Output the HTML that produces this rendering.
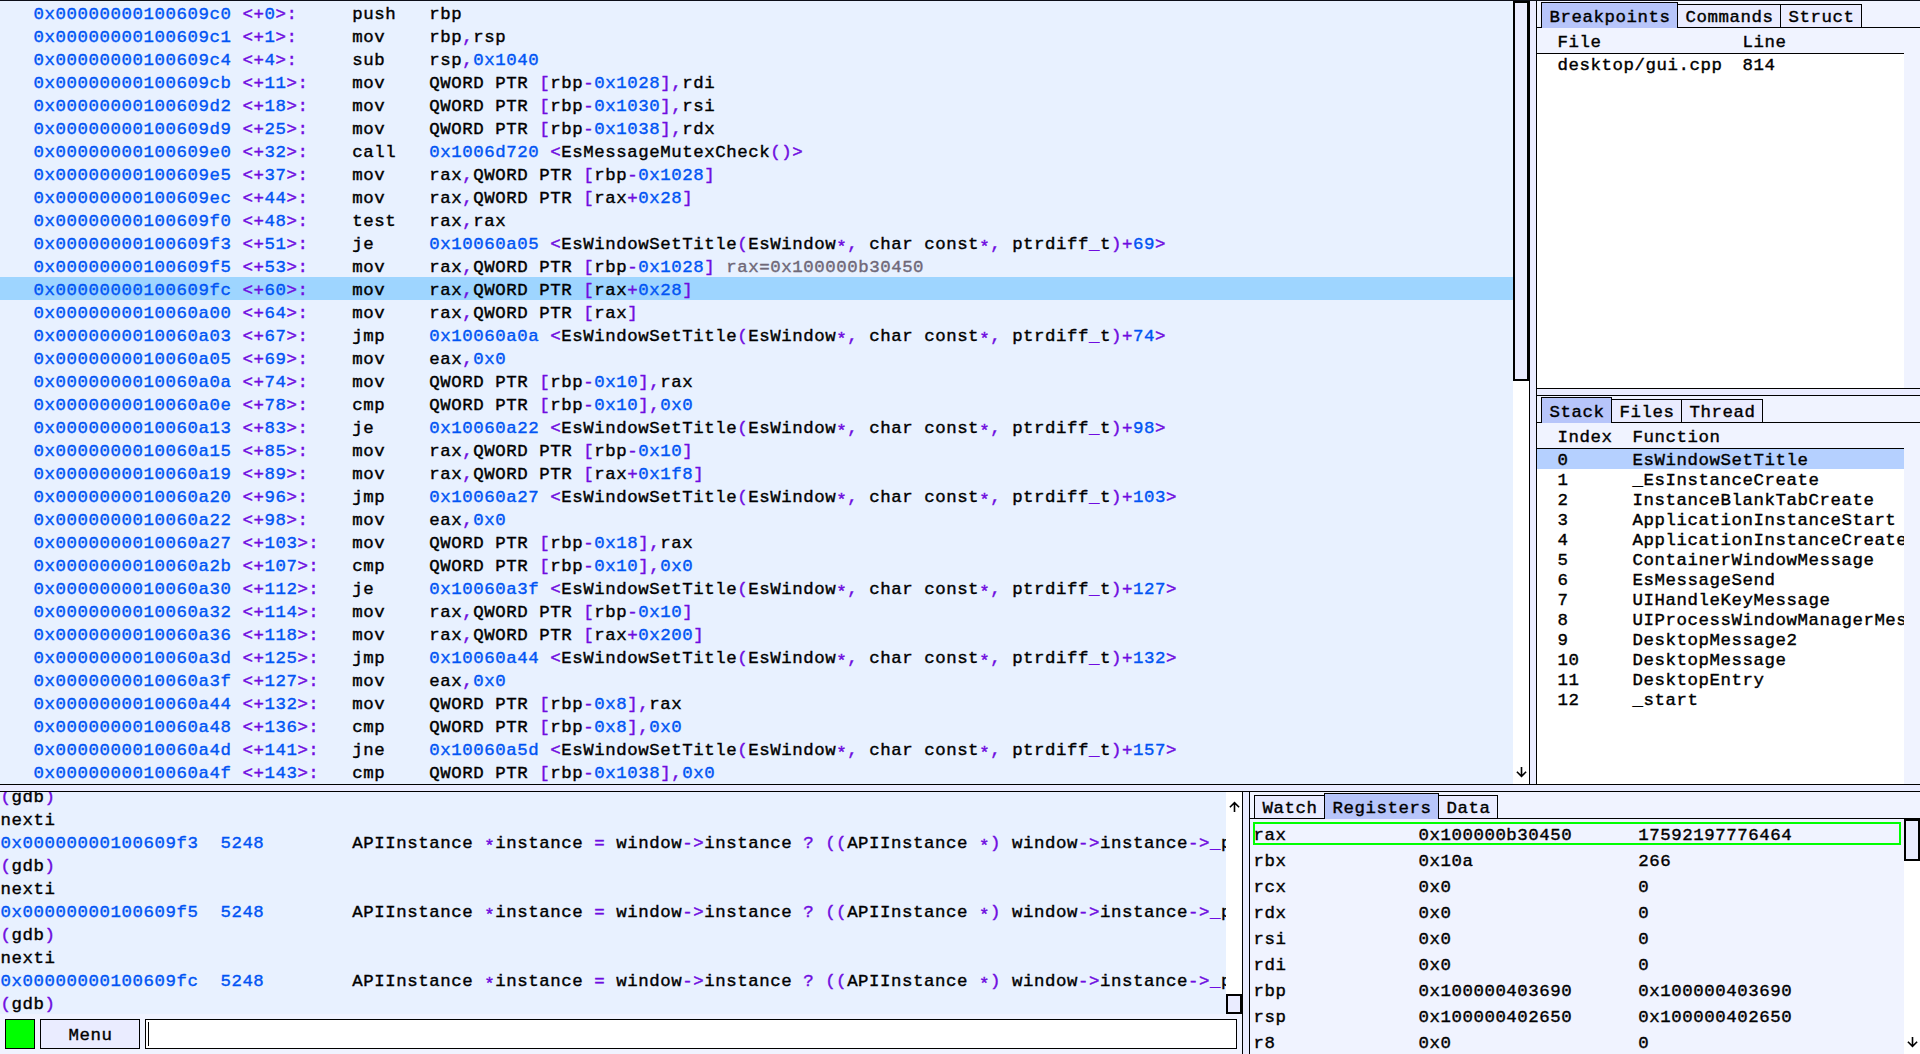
<!DOCTYPE html>
<html lang="en"><head><meta charset="utf-8"><title>gf2</title><style>
html,body{margin:0;padding:0}
body{width:1920px;height:1054px;overflow:hidden;position:relative;background:#f0f3ff;
 font-family:"Liberation Mono","DejaVu Sans Mono",monospace;font-size:17.4px;letter-spacing:0.5583px;color:#000;
 -webkit-text-stroke:0.4px currentColor;}
body div,body svg{position:absolute}
.clip{overflow:hidden}
.t{height:23px;line-height:23px;white-space:pre}
.t span{position:static}
.t span.as{position:relative;top:3px}
.n{color:#0054f4}.o{color:#6f0ce0}.c{color:#6f6878}
</style></head><body>
<div class="clip" style="left:0px;top:1px;width:1513px;height:783px;background:#e8f1ff;">
<div class="t " style="left:0.5px;top:2px;">   <span class="n">0x00000000100609c0 </span><span class="o">&lt;+</span><span class="n">0</span><span class="o">&gt;:     </span>push   rbp</div>
<div class="t " style="left:0.5px;top:25px;">   <span class="n">0x00000000100609c1 </span><span class="o">&lt;+</span><span class="n">1</span><span class="o">&gt;:     </span>mov    rbp<span class="o">,</span>rsp</div>
<div class="t " style="left:0.5px;top:48px;">   <span class="n">0x00000000100609c4 </span><span class="o">&lt;+</span><span class="n">4</span><span class="o">&gt;:     </span>sub    rsp<span class="o">,</span><span class="n">0x1040</span></div>
<div class="t " style="left:0.5px;top:71px;">   <span class="n">0x00000000100609cb </span><span class="o">&lt;+</span><span class="n">11</span><span class="o">&gt;:    </span>mov    QWORD PTR <span class="o">[</span>rbp<span class="o">-</span><span class="n">0x1028</span><span class="o">],</span>rdi</div>
<div class="t " style="left:0.5px;top:94px;">   <span class="n">0x00000000100609d2 </span><span class="o">&lt;+</span><span class="n">18</span><span class="o">&gt;:    </span>mov    QWORD PTR <span class="o">[</span>rbp<span class="o">-</span><span class="n">0x1030</span><span class="o">],</span>rsi</div>
<div class="t " style="left:0.5px;top:117px;">   <span class="n">0x00000000100609d9 </span><span class="o">&lt;+</span><span class="n">25</span><span class="o">&gt;:    </span>mov    QWORD PTR <span class="o">[</span>rbp<span class="o">-</span><span class="n">0x1038</span><span class="o">],</span>rdx</div>
<div class="t " style="left:0.5px;top:140px;">   <span class="n">0x00000000100609e0 </span><span class="o">&lt;+</span><span class="n">32</span><span class="o">&gt;:    </span>call   <span class="n">0x1006d720 </span><span class="o">&lt;</span>EsMessageMutexCheck<span class="o">()&gt;</span></div>
<div class="t " style="left:0.5px;top:163px;">   <span class="n">0x00000000100609e5 </span><span class="o">&lt;+</span><span class="n">37</span><span class="o">&gt;:    </span>mov    rax<span class="o">,</span>QWORD PTR <span class="o">[</span>rbp<span class="o">-</span><span class="n">0x1028</span><span class="o">]</span></div>
<div class="t " style="left:0.5px;top:186px;">   <span class="n">0x00000000100609ec </span><span class="o">&lt;+</span><span class="n">44</span><span class="o">&gt;:    </span>mov    rax<span class="o">,</span>QWORD PTR <span class="o">[</span>rax<span class="o">+</span><span class="n">0x28</span><span class="o">]</span></div>
<div class="t " style="left:0.5px;top:209px;">   <span class="n">0x00000000100609f0 </span><span class="o">&lt;+</span><span class="n">48</span><span class="o">&gt;:    </span>test   rax<span class="o">,</span>rax</div>
<div class="t " style="left:0.5px;top:232px;">   <span class="n">0x00000000100609f3 </span><span class="o">&lt;+</span><span class="n">51</span><span class="o">&gt;:    </span>je     <span class="n">0x10060a05 </span><span class="o">&lt;</span>EsWindowSetTitle<span class="o">(</span>EsWindow<span class="o as">*</span><span class="o">, </span>char const<span class="o as">*</span><span class="o">, </span>ptrdiff<span class="o">_</span>t<span class="o">)+</span><span class="n">69</span><span class="o">&gt;</span></div>
<div class="t " style="left:0.5px;top:255px;">   <span class="n">0x00000000100609f5 </span><span class="o">&lt;+</span><span class="n">53</span><span class="o">&gt;:    </span>mov    rax<span class="o">,</span>QWORD PTR <span class="o">[</span>rbp<span class="o">-</span><span class="n">0x1028</span><span class="o">]</span> <span class="c">rax=0x100000b30450</span></div>
<div style="left:0px;top:276px;width:1513px;height:23px;background:#9ed5ff;"></div>
<div class="t " style="left:0.5px;top:278px;">   <span class="n">0x00000000100609fc </span><span class="o">&lt;+</span><span class="n">60</span><span class="o">&gt;:    </span>mov    rax<span class="o">,</span>QWORD PTR <span class="o">[</span>rax<span class="o">+</span><span class="n">0x28</span><span class="o">]</span></div>
<div class="t " style="left:0.5px;top:301px;">   <span class="n">0x0000000010060a00 </span><span class="o">&lt;+</span><span class="n">64</span><span class="o">&gt;:    </span>mov    rax<span class="o">,</span>QWORD PTR <span class="o">[</span>rax<span class="o">]</span></div>
<div class="t " style="left:0.5px;top:324px;">   <span class="n">0x0000000010060a03 </span><span class="o">&lt;+</span><span class="n">67</span><span class="o">&gt;:    </span>jmp    <span class="n">0x10060a0a </span><span class="o">&lt;</span>EsWindowSetTitle<span class="o">(</span>EsWindow<span class="o as">*</span><span class="o">, </span>char const<span class="o as">*</span><span class="o">, </span>ptrdiff<span class="o">_</span>t<span class="o">)+</span><span class="n">74</span><span class="o">&gt;</span></div>
<div class="t " style="left:0.5px;top:347px;">   <span class="n">0x0000000010060a05 </span><span class="o">&lt;+</span><span class="n">69</span><span class="o">&gt;:    </span>mov    eax<span class="o">,</span><span class="n">0x0</span></div>
<div class="t " style="left:0.5px;top:370px;">   <span class="n">0x0000000010060a0a </span><span class="o">&lt;+</span><span class="n">74</span><span class="o">&gt;:    </span>mov    QWORD PTR <span class="o">[</span>rbp<span class="o">-</span><span class="n">0x10</span><span class="o">],</span>rax</div>
<div class="t " style="left:0.5px;top:393px;">   <span class="n">0x0000000010060a0e </span><span class="o">&lt;+</span><span class="n">78</span><span class="o">&gt;:    </span>cmp    QWORD PTR <span class="o">[</span>rbp<span class="o">-</span><span class="n">0x10</span><span class="o">],</span><span class="n">0x0</span></div>
<div class="t " style="left:0.5px;top:416px;">   <span class="n">0x0000000010060a13 </span><span class="o">&lt;+</span><span class="n">83</span><span class="o">&gt;:    </span>je     <span class="n">0x10060a22 </span><span class="o">&lt;</span>EsWindowSetTitle<span class="o">(</span>EsWindow<span class="o as">*</span><span class="o">, </span>char const<span class="o as">*</span><span class="o">, </span>ptrdiff<span class="o">_</span>t<span class="o">)+</span><span class="n">98</span><span class="o">&gt;</span></div>
<div class="t " style="left:0.5px;top:439px;">   <span class="n">0x0000000010060a15 </span><span class="o">&lt;+</span><span class="n">85</span><span class="o">&gt;:    </span>mov    rax<span class="o">,</span>QWORD PTR <span class="o">[</span>rbp<span class="o">-</span><span class="n">0x10</span><span class="o">]</span></div>
<div class="t " style="left:0.5px;top:462px;">   <span class="n">0x0000000010060a19 </span><span class="o">&lt;+</span><span class="n">89</span><span class="o">&gt;:    </span>mov    rax<span class="o">,</span>QWORD PTR <span class="o">[</span>rax<span class="o">+</span><span class="n">0x1f8</span><span class="o">]</span></div>
<div class="t " style="left:0.5px;top:485px;">   <span class="n">0x0000000010060a20 </span><span class="o">&lt;+</span><span class="n">96</span><span class="o">&gt;:    </span>jmp    <span class="n">0x10060a27 </span><span class="o">&lt;</span>EsWindowSetTitle<span class="o">(</span>EsWindow<span class="o as">*</span><span class="o">, </span>char const<span class="o as">*</span><span class="o">, </span>ptrdiff<span class="o">_</span>t<span class="o">)+</span><span class="n">103</span><span class="o">&gt;</span></div>
<div class="t " style="left:0.5px;top:508px;">   <span class="n">0x0000000010060a22 </span><span class="o">&lt;+</span><span class="n">98</span><span class="o">&gt;:    </span>mov    eax<span class="o">,</span><span class="n">0x0</span></div>
<div class="t " style="left:0.5px;top:531px;">   <span class="n">0x0000000010060a27 </span><span class="o">&lt;+</span><span class="n">103</span><span class="o">&gt;:   </span>mov    QWORD PTR <span class="o">[</span>rbp<span class="o">-</span><span class="n">0x18</span><span class="o">],</span>rax</div>
<div class="t " style="left:0.5px;top:554px;">   <span class="n">0x0000000010060a2b </span><span class="o">&lt;+</span><span class="n">107</span><span class="o">&gt;:   </span>cmp    QWORD PTR <span class="o">[</span>rbp<span class="o">-</span><span class="n">0x10</span><span class="o">],</span><span class="n">0x0</span></div>
<div class="t " style="left:0.5px;top:577px;">   <span class="n">0x0000000010060a30 </span><span class="o">&lt;+</span><span class="n">112</span><span class="o">&gt;:   </span>je     <span class="n">0x10060a3f </span><span class="o">&lt;</span>EsWindowSetTitle<span class="o">(</span>EsWindow<span class="o as">*</span><span class="o">, </span>char const<span class="o as">*</span><span class="o">, </span>ptrdiff<span class="o">_</span>t<span class="o">)+</span><span class="n">127</span><span class="o">&gt;</span></div>
<div class="t " style="left:0.5px;top:600px;">   <span class="n">0x0000000010060a32 </span><span class="o">&lt;+</span><span class="n">114</span><span class="o">&gt;:   </span>mov    rax<span class="o">,</span>QWORD PTR <span class="o">[</span>rbp<span class="o">-</span><span class="n">0x10</span><span class="o">]</span></div>
<div class="t " style="left:0.5px;top:623px;">   <span class="n">0x0000000010060a36 </span><span class="o">&lt;+</span><span class="n">118</span><span class="o">&gt;:   </span>mov    rax<span class="o">,</span>QWORD PTR <span class="o">[</span>rax<span class="o">+</span><span class="n">0x200</span><span class="o">]</span></div>
<div class="t " style="left:0.5px;top:646px;">   <span class="n">0x0000000010060a3d </span><span class="o">&lt;+</span><span class="n">125</span><span class="o">&gt;:   </span>jmp    <span class="n">0x10060a44 </span><span class="o">&lt;</span>EsWindowSetTitle<span class="o">(</span>EsWindow<span class="o as">*</span><span class="o">, </span>char const<span class="o as">*</span><span class="o">, </span>ptrdiff<span class="o">_</span>t<span class="o">)+</span><span class="n">132</span><span class="o">&gt;</span></div>
<div class="t " style="left:0.5px;top:669px;">   <span class="n">0x0000000010060a3f </span><span class="o">&lt;+</span><span class="n">127</span><span class="o">&gt;:   </span>mov    eax<span class="o">,</span><span class="n">0x0</span></div>
<div class="t " style="left:0.5px;top:692px;">   <span class="n">0x0000000010060a44 </span><span class="o">&lt;+</span><span class="n">132</span><span class="o">&gt;:   </span>mov    QWORD PTR <span class="o">[</span>rbp<span class="o">-</span><span class="n">0x8</span><span class="o">],</span>rax</div>
<div class="t " style="left:0.5px;top:715px;">   <span class="n">0x0000000010060a48 </span><span class="o">&lt;+</span><span class="n">136</span><span class="o">&gt;:   </span>cmp    QWORD PTR <span class="o">[</span>rbp<span class="o">-</span><span class="n">0x8</span><span class="o">],</span><span class="n">0x0</span></div>
<div class="t " style="left:0.5px;top:738px;">   <span class="n">0x0000000010060a4d </span><span class="o">&lt;+</span><span class="n">141</span><span class="o">&gt;:   </span>jne    <span class="n">0x10060a5d </span><span class="o">&lt;</span>EsWindowSetTitle<span class="o">(</span>EsWindow<span class="o as">*</span><span class="o">, </span>char const<span class="o as">*</span><span class="o">, </span>ptrdiff<span class="o">_</span>t<span class="o">)+</span><span class="n">157</span><span class="o">&gt;</span></div>
<div class="t " style="left:0.5px;top:761px;">   <span class="n">0x0000000010060a4f </span><span class="o">&lt;+</span><span class="n">143</span><span class="o">&gt;:   </span>cmp    QWORD PTR <span class="o">[</span>rbp<span class="o">-</span><span class="n">0x1038</span><span class="o">],</span><span class="n">0x0</span></div>
</div>
<div style="left:1513px;top:1px;width:16px;height:783px;background:#ffffff;"></div>
<div style="left:1513px;top:1px;width:16px;height:380px;background:#eaecff;box-sizing:border-box;border:2px solid #000000"></div>
<svg style="left:1513px;top:766px" width="16" height="12" viewBox="-8.5 -1 16 12"><path d="M0 0 L0 9.4 M-4.6 4.8 L0 9.4 L4.6 4.8" fill="none" stroke="#000" stroke-width="1.6" stroke-linecap="butt" stroke-linejoin="miter"/></svg>
<div style="left:1529px;top:1px;width:8px;height:783px;background:#eaecff;box-sizing:border-box;border-left:1px solid #000000;border-right:1px solid #000000"></div>
<div style="left:1537px;top:1px;width:383px;height:387px;background:#f0f3ff;"></div>
<div style="left:1537px;top:1px;width:383px;height:27px;background:#f0f3ff;box-sizing:border-box;border-bottom:1px solid #000000"></div>
<div style="left:1541px;top:2px;width:137px;height:26px;background:#b7c5fa;box-sizing:border-box;border:1px solid #000000;border-bottom:none"></div>
<div class="t " style="left:1549.5px;top:6px;">Breakpoints</div>
<div style="left:1677px;top:4px;width:104px;height:24px;background:#eaecff;box-sizing:border-box;border:1px solid #000000"></div>
<div class="t " style="left:1685.5px;top:6px;">Commands</div>
<div style="left:1780px;top:4px;width:82px;height:24px;background:#eaecff;box-sizing:border-box;border:1px solid #000000"></div>
<div class="t " style="left:1788.5px;top:6px;">Struct</div>
<div style="left:1537px;top:28px;width:367px;height:26px;background:#f0f3ff;box-sizing:border-box;border-bottom:1px solid #000000"></div>
<div style="left:1537px;top:54px;width:367px;height:334px;background:#ffffff;"></div>
<div class="t " style="left:1557.5px;top:31px;">File</div>
<div class="t " style="left:1742.5px;top:31px;">Line</div>
<div class="t " style="left:1557.5px;top:54px;">desktop/gui.cpp</div>
<div class="t " style="left:1742.5px;top:54px;">814</div>
<div style="left:1537px;top:388px;width:383px;height:8px;background:#eaecff;box-sizing:border-box;border-top:1px solid #000000;border-bottom:1px solid #000000"></div>
<div style="left:1537px;top:396px;width:383px;height:388px;background:#f0f3ff;"></div>
<div style="left:1537px;top:396px;width:383px;height:27px;background:#f0f3ff;box-sizing:border-box;border-bottom:1px solid #000000"></div>
<div style="left:1541px;top:397px;width:71px;height:26px;background:#b7c5fa;box-sizing:border-box;border:1px solid #000000;border-bottom:none"></div>
<div class="t " style="left:1549.5px;top:401px;">Stack</div>
<div style="left:1611px;top:399px;width:71px;height:24px;background:#eaecff;box-sizing:border-box;border:1px solid #000000"></div>
<div class="t " style="left:1619.5px;top:401px;">Files</div>
<div style="left:1681px;top:399px;width:82px;height:24px;background:#eaecff;box-sizing:border-box;border:1px solid #000000"></div>
<div class="t " style="left:1689.5px;top:401px;">Thread</div>
<div style="left:1537px;top:423px;width:367px;height:26px;background:#f0f3ff;box-sizing:border-box;border-bottom:1px solid #000000"></div>
<div class="clip" style="left:1537px;top:449px;width:367px;height:335px;background:#ffffff;">
<div style="left:0px;top:0px;width:367px;height:20px;background:#b5d0ff;"></div>
<div class="t " style="left:20.5px;top:0px;">0</div>
<div class="t " style="left:95.5px;top:0px;">EsWindowSetTitle</div>
<div class="t " style="left:20.5px;top:20px;">1</div>
<div class="t " style="left:95.5px;top:20px;">_EsInstanceCreate</div>
<div class="t " style="left:20.5px;top:40px;">2</div>
<div class="t " style="left:95.5px;top:40px;">InstanceBlankTabCreate</div>
<div class="t " style="left:20.5px;top:60px;">3</div>
<div class="t " style="left:95.5px;top:60px;">ApplicationInstanceStart</div>
<div class="t " style="left:20.5px;top:80px;">4</div>
<div class="t " style="left:95.5px;top:80px;">ApplicationInstanceCreate</div>
<div class="t " style="left:20.5px;top:100px;">5</div>
<div class="t " style="left:95.5px;top:100px;">ContainerWindowMessage</div>
<div class="t " style="left:20.5px;top:120px;">6</div>
<div class="t " style="left:95.5px;top:120px;">EsMessageSend</div>
<div class="t " style="left:20.5px;top:140px;">7</div>
<div class="t " style="left:95.5px;top:140px;">UIHandleKeyMessage</div>
<div class="t " style="left:20.5px;top:160px;">8</div>
<div class="t " style="left:95.5px;top:160px;">UIProcessWindowManagerMessage</div>
<div class="t " style="left:20.5px;top:180px;">9</div>
<div class="t " style="left:95.5px;top:180px;">DesktopMessage2</div>
<div class="t " style="left:20.5px;top:200px;">10</div>
<div class="t " style="left:95.5px;top:200px;">DesktopMessage</div>
<div class="t " style="left:20.5px;top:220px;">11</div>
<div class="t " style="left:95.5px;top:220px;">DesktopEntry</div>
<div class="t " style="left:20.5px;top:240px;">12</div>
<div class="t " style="left:95.5px;top:240px;">_start</div>
</div>
<div class="t " style="left:1557.5px;top:426px;">Index</div>
<div class="t " style="left:1632.5px;top:426px;">Function</div>
<div style="left:0px;top:784px;width:1920px;height:8px;background:#eaecff;box-sizing:border-box;border-top:1px solid #000000;border-bottom:1px solid #000000"></div>
<div class="clip" style="left:0px;top:792px;width:1226px;height:222px;background:#e8f1ff;">
<div class="t " style="left:0.5px;top:-6px;"><span class="o">(</span>gdb<span class="o">) </span></div>
<div class="t " style="left:0.5px;top:17px;">nexti</div>
<div class="t " style="left:0.5px;top:40px;"><span class="n">0x00000000100609f3  5248        </span>APIInstance <span class="o as">*</span>instance <span class="o">= </span>window<span class="o">-&gt;</span>instance <span class="o">? ((</span>APIInstance <span class="o as">*</span><span class="o">) </span>window<span class="o">-&gt;</span>instance<span class="o">-&gt;_</span>p</div>
<div class="t " style="left:0.5px;top:63px;"><span class="o">(</span>gdb<span class="o">) </span></div>
<div class="t " style="left:0.5px;top:86px;">nexti</div>
<div class="t " style="left:0.5px;top:109px;"><span class="n">0x00000000100609f5  5248        </span>APIInstance <span class="o as">*</span>instance <span class="o">= </span>window<span class="o">-&gt;</span>instance <span class="o">? ((</span>APIInstance <span class="o as">*</span><span class="o">) </span>window<span class="o">-&gt;</span>instance<span class="o">-&gt;_</span>p</div>
<div class="t " style="left:0.5px;top:132px;"><span class="o">(</span>gdb<span class="o">) </span></div>
<div class="t " style="left:0.5px;top:155px;">nexti</div>
<div class="t " style="left:0.5px;top:178px;"><span class="n">0x00000000100609fc  5248        </span>APIInstance <span class="o as">*</span>instance <span class="o">= </span>window<span class="o">-&gt;</span>instance <span class="o">? ((</span>APIInstance <span class="o as">*</span><span class="o">) </span>window<span class="o">-&gt;</span>instance<span class="o">-&gt;_</span>p</div>
<div class="t " style="left:0.5px;top:201px;"><span class="o">(</span>gdb<span class="o">) </span></div>
</div>
<div style="left:1226px;top:792px;width:16px;height:222px;background:#ffffff;"></div>
<svg style="left:1226px;top:801px" width="16" height="12" viewBox="-8.5 -1 16 12"><path d="M0 10 L0 0.6 M-4.6 5.2 L0 0.6 L4.6 5.2" fill="none" stroke="#000" stroke-width="1.6" stroke-linecap="butt" stroke-linejoin="miter"/></svg>
<div style="left:1226px;top:994px;width:16px;height:20px;background:#eaecff;box-sizing:border-box;border:2px solid #000000"></div>
<div style="left:0px;top:1014px;width:1242px;height:40px;background:#f0f3ff;"></div>
<div style="left:5px;top:1019px;width:30px;height:30px;background:#00ff00;box-sizing:border-box;border:1px solid #000000"></div>
<div style="left:40px;top:1019px;width:100px;height:30px;background:#eaecff;box-sizing:border-box;border:1px solid #000000"></div>
<div class="t " style="left:68.5px;top:1024px;">Menu</div>
<div style="left:145px;top:1019px;width:1092px;height:30px;background:#ffffff;box-sizing:border-box;border:1px solid #000000"></div>
<div style="left:148px;top:1022px;width:1px;height:24px;background:#000;"></div>
<div style="left:1242px;top:792px;width:8px;height:262px;background:#eaecff;box-sizing:border-box;border-left:1px solid #000000;border-right:1px solid #000000"></div>
<div style="left:1250px;top:792px;width:670px;height:262px;background:#f0f3ff;"></div>
<div style="left:1250px;top:792px;width:670px;height:27px;background:#f0f3ff;box-sizing:border-box;border-bottom:1px solid #000000"></div>
<div style="left:1254px;top:795px;width:71px;height:24px;background:#eaecff;box-sizing:border-box;border:1px solid #000000"></div>
<div class="t " style="left:1262.5px;top:797px;">Watch</div>
<div style="left:1324px;top:793px;width:115px;height:26px;background:#b7c5fa;box-sizing:border-box;border:1px solid #000000;border-bottom:none"></div>
<div class="t " style="left:1332.5px;top:797px;">Registers</div>
<div style="left:1438px;top:795px;width:60px;height:24px;background:#eaecff;box-sizing:border-box;border:1px solid #000000"></div>
<div class="t " style="left:1446.5px;top:797px;">Data</div>
<div style="left:1904px;top:819px;width:16px;height:235px;background:#ffffff;"></div>
<div style="left:1904px;top:819px;width:16px;height:42px;background:#eaecff;box-sizing:border-box;border:2px solid #000000"></div>
<svg style="left:1904px;top:1036px" width="16" height="12" viewBox="-8.5 -1 16 12"><path d="M0 0 L0 9.4 M-4.6 4.8 L0 9.4 L4.6 4.8" fill="none" stroke="#000" stroke-width="1.6" stroke-linecap="butt" stroke-linejoin="miter"/></svg>
<div class="clip" style="left:1250px;top:819px;width:654px;height:235px;">
<div style="left:3px;top:3px;width:648px;height:23px;background:transparent;box-sizing:border-box;border:2px solid #00ff00"></div>
<div class="t " style="left:3.5px;top:5px;">rax            0x100000b30450      17592197776464</div>
<div class="t " style="left:3.5px;top:31px;">rbx            0x10a               266</div>
<div class="t " style="left:3.5px;top:57px;">rcx            0x0                 0</div>
<div class="t " style="left:3.5px;top:83px;">rdx            0x0                 0</div>
<div class="t " style="left:3.5px;top:109px;">rsi            0x0                 0</div>
<div class="t " style="left:3.5px;top:135px;">rdi            0x0                 0</div>
<div class="t " style="left:3.5px;top:161px;">rbp            0x100000403690      0x100000403690</div>
<div class="t " style="left:3.5px;top:187px;">rsp            0x100000402650      0x100000402650</div>
<div class="t " style="left:3.5px;top:213px;">r8             0x0                 0</div>
</div>
<div style="left:0px;top:0px;width:1920px;height:1px;background:#0c0e18;"></div>
</body></html>
